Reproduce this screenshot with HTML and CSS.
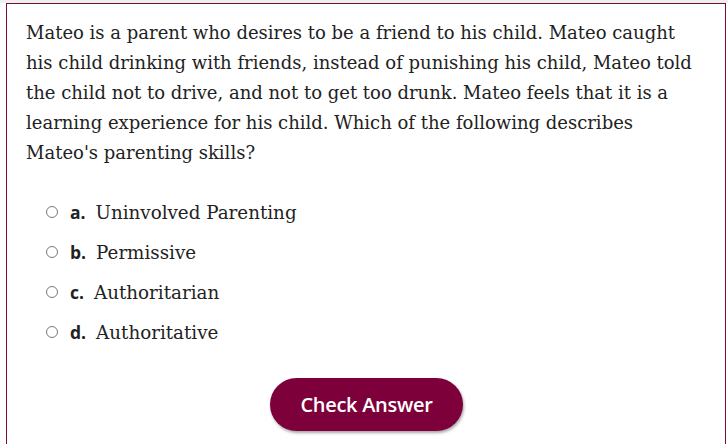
FILE: index.html
```html
<!DOCTYPE html>
<html lang="en">
<head>
<meta charset="utf-8">
<title>Question</title>
<link rel="stylesheet" href="styles.css">
</head>
<body>
<div class="card">
  <p class="question">Mateo is a parent who desires to be a friend to his child. Mateo caught<br>his child drinking with friends, instead of punishing his child, Mateo told<br>the child not to drive, and not to get too drunk. Mateo feels that it is a<br>learning experience for his child. Which of the following describes<br>Mateo's parenting skills?</p>
  <ul class="options">
    <li class="option"><span class="radio"></span><span class="letter">a.</span><span class="text">Uninvolved Parenting</span></li>
    <li class="option"><span class="radio"></span><span class="letter">b.</span><span class="text">Permissive</span></li>
    <li class="option"><span class="radio"></span><span class="letter">c.</span><span class="text">Authoritarian</span></li>
    <li class="option"><span class="radio"></span><span class="letter">d.</span><span class="text">Authoritative</span></li>
  </ul>
  <div class="actions"><button class="check">Check Answer</button></div>
</div>
</body>
</html>
```
FILE: styles.css
```css
html, body {
  margin: 0;
  padding: 0;
  background: #ffffff;
}
body {
  border-top: 3px solid #efefef;
  padding: 0 2px 0 6px;
  height: 444px;
  box-sizing: border-box;
}
.card {
  border: 1px solid #7a0b3c;
  height: 443px;
  box-sizing: border-box;
  padding: 14px 19px 0 19px;
  font-family: "DejaVu Serif", "Liberation Serif", serif;
  color: #222222;
}
.question {
  margin: 0;
  font-size: 18px;
  line-height: 30px;
  white-space: nowrap;
}
.options {
  list-style: none;
  margin: 24px 0 0 0;
  padding: 0 0 0 20px;
}
.option {
  display: flex;
  align-items: center;
  height: 40px;
  font-size: 18.3px;
}
.radio {
  width: 12px;
  height: 12px;
  border: 1px solid #777777;
  border-radius: 50%;
  box-sizing: border-box;
  margin-right: 12px;
}
.letter {
  font-family: "Open Sans", sans-serif;
  font-weight: 700;
  font-size: 17.5px;
  margin-right: 10px;
  color: #222222;
}
.text {
  color: #222222;
}
.actions {
  display: flex;
  justify-content: center;
  margin-top: 26px;
}
.check {
  width: 193px;
  height: 53px;
  border: none;
  border-radius: 27px;
  background: #7d003b;
  color: #ffffff;
  font-family: "Open Sans", sans-serif;
  font-weight: 600;
  font-size: 20px;
  letter-spacing: -0.3px;
  box-shadow: 1px 2px 3px rgba(0, 0, 0, 0.35);
  margin-left: 1px;
}
```
